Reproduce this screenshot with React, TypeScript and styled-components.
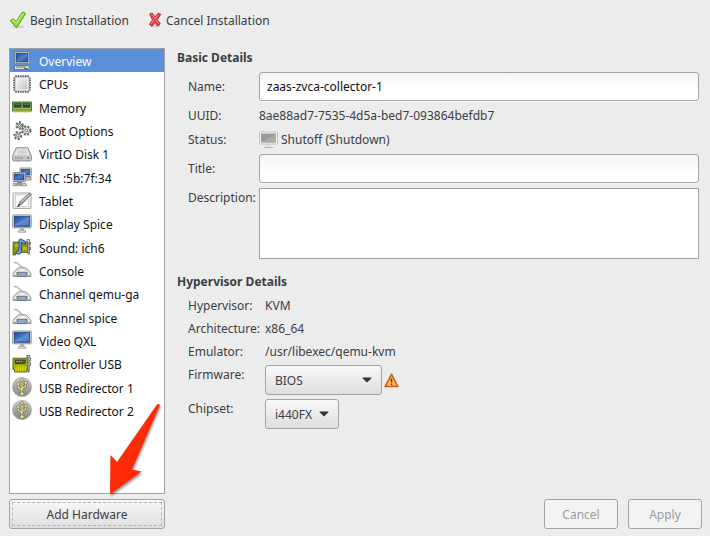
import React from "react";
import styled, { createGlobalStyle } from "styled-components";

const GlobalStyle = createGlobalStyle`
  *, *::before, *::after { box-sizing: border-box; }
  body {
    margin: 0;
    background: #ececec;
    color: #3a4043;
    font-family: "Noto Sans", "Open Sans", sans-serif;
    font-size: 12px;
    line-height: 19px;
  }
  button, input, select, textarea { font: inherit; color: inherit; margin: 0; }
`;

const Window = styled.div`
  display: flex;
  flex-direction: column;
  min-height: 100vh;
  padding: 0 8px 7px 9px;
`;

const Toolbar = styled.header`
  display: flex;
  gap: 18px;
  height: 40px;
  align-items: center;
`;

const ToolButton = styled.button`
  display: flex;
  align-items: center;
  gap: 3px;
  padding: 0;
  border: 0;
  background: none;
`;

const Body = styled.div`
  display: flex;
  flex: 1;
  gap: 12px;
  padding-top: 8px;
`;

const Sidebar = styled.aside`
  position: relative;
  display: flex;
  flex-direction: column;
  gap: 5px;
  flex: 0 0 156px;
`;

const ListFrame = styled.nav`
  flex: 1;
  border: 1px solid #a1a1a1;
  background: #fff;
`;

const HardwareList = styled.ul`
  display: grid;
  grid-auto-rows: 1fr;
  height: 373px;
  margin: 0;
  padding: 0;
  list-style: none;
`;

const HardwareItem = styled.button<{ $selected: boolean }>`
  display: flex;
  align-items: center;
  gap: 7px;
  width: 100%;
  height: 100%;
  padding: 0 2px;
  border: 0;
  text-align: left;
  white-space: nowrap;
  color: ${(p) => (p.$selected ? "#fff" : "#111")};
  background: ${(p) => (p.$selected ? "#5a8fdc" : "transparent")};
`;

const ItemLabel = styled.span`
  padding-top: 2px;
`;

const PushButton = styled.button`
  height: 30px;
  min-width: 74px;
  padding: 0 10px;
  border: 1px solid #a3a3a3;
  border-radius: 3px;
  background: linear-gradient(#f8f8f8, #dedede);
  &:disabled {
    color: #9b9d9e;
    background: #f3f3f3;
  }
`;

const FocusedButton = styled(PushButton)`
  outline: 1px dashed #b5b5b5;
  outline-offset: -4px;
`;

const Pointer = styled.svg`
  position: absolute;
  right: 0;
  bottom: 30px;
  width: 60px;
  height: 96px;
  overflow: visible;
  pointer-events: none;
`;

const Details = styled.main`
  display: flex;
  flex-direction: column;
  flex: 1;
  min-width: 0;
`;

const Heading = styled.h2`
  margin: 0;
  padding-bottom: 5px;
  font-size: 12px;
  line-height: 19px;
  font-weight: 700;
`;

const BasicForm = styled.div`
  display: grid;
  grid-template-columns: 71px 1fr;
  row-gap: 5px;
  padding: 0 3px 0 11px;
  margin-bottom: 13px;
`;

const HypervisorForm = styled.div`
  display: grid;
  grid-template-columns: 77px 1fr;
  row-gap: 4px;
  padding: 0 3px 0 11px;
`;

const Label = styled.label<{ $centered?: boolean }>`
  align-self: ${(p) => (p.$centered ? "center" : "start")};
  white-space: nowrap;
`;

const Caption = styled.span`
  white-space: nowrap;
`;

const Value = styled.span`
  display: flex;
  align-items: center;
  gap: 3px;
  height: 19px;
`;

const TextField = styled.input`
  width: 100%;
  height: 29px;
  padding: 0 7px;
  border: 1px solid #a3a3a3;
  border-radius: 3px;
  color: #111;
  background: linear-gradient(#f5f5f5, #fff 70%);
  box-shadow: 0 1px 0 #f8f8f8;
`;

const TextArea = styled.textarea`
  display: block;
  width: 100%;
  height: 71px;
  border: 1px solid #a3a3a3;
  border-radius: 0;
  background: #fff;
  resize: none;
`;

const SelectRow = styled.div`
  display: flex;
  align-items: center;
  gap: 2px;
`;

const SelectFrame = styled.div<{ $width: number }>`
  position: relative;
  width: ${(p) => p.$width}px;
`;

const Select = styled.select`
  appearance: none;
  display: block;
  width: 100%;
  height: 30px;
  padding: 0 20px 0 9px;
  border: 1px solid #a3a3a3;
  border-radius: 3px;
  background: linear-gradient(#f8f8f8, #dedede);
`;

const Caret = styled.svg`
  position: absolute;
  right: 10px;
  top: 12px;
  width: 10px;
  height: 6px;
  pointer-events: none;
`;

const Actions = styled.footer`
  display: flex;
  justify-content: flex-end;
  gap: 10px;
  margin-top: auto;
`;

const Glyph = styled.svg<{ $size?: number }>`
  flex: none;
  width: ${(p) => p.$size ?? 20}px;
  height: ${(p) => p.$size ?? 20}px;
`;

type IconName =
  | "computer" | "cpu" | "memory" | "gears" | "disk" | "network" | "tablet"
  | "display" | "sound" | "serial" | "card" | "usb";

const Defs = () => (
  <svg width="0" height="0" style={{ position: "absolute" }} aria-hidden>
    <defs>
      <linearGradient id="screen" x1="0" y1="0" x2="1" y2="1">
        <stop offset="0" stopColor="#1f4796" />
        <stop offset="0.5" stopColor="#4c7ccb" />
        <stop offset="1" stopColor="#2753a5" />
      </linearGradient>
      <linearGradient id="metal" x1="0" y1="0" x2="1" y2="1">
        <stop offset="0" stopColor="#fafafa" />
        <stop offset="1" stopColor="#bdbdbb" />
      </linearGradient>
      <linearGradient id="dark" x1="0" y1="0" x2="0" y2="1">
        <stop offset="0" stopColor="#c9c9c9" />
        <stop offset="1" stopColor="#868686" />
      </linearGradient>
    </defs>
  </svg>
);

const Gear = ({ x, y, r }: { x: number; y: number; r: number }) => (
  <g>
    <circle cx={x} cy={y} r={r} fill="none" stroke="#62655f" strokeWidth="2.6" strokeDasharray="1.8 1.4" />
    <circle cx={x} cy={y} r={r - 0.6} fill="#eeeeec" stroke="#777a74" strokeWidth="0.8" />
    <circle cx={x} cy={y} r={r * 0.36} fill="#fff" stroke="#62655f" strokeWidth="0.9" />
  </g>
);

const Screen = ({ x, y, w, h }: { x: number; y: number; w: number; h: number }) => (
  <g>
    <rect x={x} y={y} width={w} height={h} rx="0.8" fill="#e6e6e2" stroke="#70736e" strokeWidth="0.8" />
    <rect x={x + 1.5} y={y + 1.5} width={w - 3} height={h - 3} fill="url(#screen)" stroke="#193a78" strokeWidth="0.7" />
  </g>
);

const artwork: Record<IconName, React.ReactNode> = {
  computer: (
    <>
      <Screen x={2.5} y={1} w={15} h={11.5} />
      <path d="M8 12.5h4l1 2H7z" fill="#8e918c" />
      <path d="M2.5 14.5h13.5l2 2.5v1.5H2.5z" fill="#e1e1dd" stroke="#676a65" strokeWidth="0.8" />
      <path d="M4 16h10M12 17.5h4.5" stroke="#4d504b" strokeWidth="0.8" />
    </>
  ),
  cpu: (
    <>
      <path d="M4 1v18M6.4 1v18M8.8 1v18M11.2 1v18M13.6 1v18M16 1v18M1 4h18M1 6.4h18M1 8.8h18M1 11.2h18M1 13.6h18M1 16h18" stroke="#5e605c" strokeWidth="1.2" />
      <rect x="2.6" y="2.6" width="14.8" height="14.8" rx="1" fill="#d9d9d7" stroke="#777975" strokeWidth="0.8" />
      <rect x="4.4" y="4.4" width="11.2" height="11.2" fill="url(#metal)" stroke="#f7f7f7" strokeWidth="0.6" />
    </>
  ),
  memory: (
    <>
      <rect x="0.5" y="5" width="19" height="9" fill="#5f9a48" stroke="#3b652a" strokeWidth="0.8" />
      <path d="M2 6.2h7v4.4H2zM11 6.2h7v4.4h-7z" fill="#394036" />
      <path d="M3 7.3h5M12 7.3h5" stroke="#76806f" strokeWidth="0.8" />
      <path d="M1 11.7h18" stroke="#a4cc72" strokeWidth="0.9" />
      <path d="M1 14.3h18" stroke="#c1ab3c" strokeWidth="2.4" strokeDasharray="1.2 0.6" />
    </>
  ),
  gears: (
    <>
      <Gear x={7.5} y={4.5} r={2.9} />
      <Gear x={14.2} y={9.5} r={3.9} />
      <Gear x={5.8} y={14.6} r={3.2} />
    </>
  ),
  disk: (
    <>
      <path d="M4.4 3.8h11.2l3.6 7.5v4.6q0 1-1 1H1.8q-1 0-1-1v-4.6z" fill="url(#metal)" stroke="#747672" strokeWidth="0.9" />
      <path d="M4.8 4.8h10.4l3 6.5H1.8z" fill="#e9e9e7" stroke="#c5c6c3" strokeWidth="0.6" />
      <ellipse cx="10" cy="8" rx="4.8" ry="2.5" fill="#d3d4d1" />
      <path d="M1.2 11.6h17.6v4.6H1.2z" fill="#c5c6c3" />
      <path d="M3 14h8" stroke="#878985" strokeWidth="1.3" strokeDasharray="0.8 0.7" />
      <circle cx="16" cy="14" r="1" fill="#777" />
    </>
  ),
  network: (
    <>
      <Screen x={8} y={1} w={11.3} h={8.5} />
      <path d="M13 10h6v3h-6z" fill="#c8c9c5" stroke="#6b6e69" strokeWidth="0.7" />
      <Screen x={1} y={5.5} w={12.5} h={9} />
      <path d="M5 14.8h5v1.4H5z" fill="#888b86" />
      <path d="M1.5 16.2h12l1.3 2.5H1z" fill="#e1e1dd" stroke="#676a65" strokeWidth="0.7" />
      <path d="M3 17.3h8" stroke="#555852" strokeWidth="0.6" />
    </>
  ),
  tablet: (
    <>
      <rect x="1" y="2" width="18" height="15.5" rx="1" fill="#ededeb" stroke="#a8aaa6" />
      <rect x="3.5" y="4" width="13" height="11.5" fill="#fafafa" stroke="#c7c8c5" strokeWidth="0.7" />
      <path d="M6.3 15l1.4-4.2L17.5 2.2l1.6 1.1-9 9.6z" fill="#a7a9a5" stroke="#5f625d" strokeWidth="0.8" />
      <path d="M9.5 10.5l7.8-6.8" stroke="#e4e5e2" strokeWidth="0.8" />
      <path d="M5.6 15.8l2-2.4" stroke="#333" strokeWidth="1.2" />
    </>
  ),
  display: (
    <>
      <Screen x={0.8} y={1} w={18.4} h={12.8} />
      <path d="M2.5 10.8L17 3v8.4z" fill="#78a0df" opacity="0.45" />
      <path d="M7.8 14h4.4v2.7H7.8z" fill="#b4b6b2" />
      <path d="M6 17q4-1.5 8 0v1.2H6z" fill="#e8e8e5" stroke="#90928e" strokeWidth="0.7" />
    </>
  ),
  sound: (
    <>
      <path d="M1 5h15v10.5H3.5V18H1z" fill="#8c981b" stroke="#525d0c" strokeWidth="0.8" />
      <path d="M3 7h4v3H3zM11 10h4v3h-4z" fill="#b5b830" />
      <path d="M15 2.5h2.5V17H16V5h-1z" fill="#d7d8d4" stroke="#666963" strokeWidth="0.8" />
      <path d="M18.2 5v3M18.2 10v3" stroke="#555" strokeWidth="1.2" />
      <path d="M7 3l1.7-1 4.4 2.3.5 3.1-4.3-2.2v9.2q0 2.1-2.2 2.7-2.5.5-3-1.1-.3-2 2.9-3z" fill="#79a5dc" stroke="#204a87" />
    </>
  ),
  serial: (
    <>
      <path d="M2.2 3.2Q3.5 1.5 6 3.8q3.2 3.2 6.3 4.8" fill="none" stroke="#b3b5b0" strokeWidth="1.5" />
      <path d="M6.2 7.8h7.5l2.8 2.4 2.4 3v3.2H1v-3l3-3.4z" fill="#e5e5e2" stroke="#8c8e8a" strokeWidth="0.9" />
      <path d="M7.4 8.8h5.3l1.7 2.4H5.6z" fill="#fff" stroke="#aeb0ac" strokeWidth="0.6" />
      <path d="M4.7 12.6h10.6l-1 4H5.7z" fill="#6c94c4" stroke="#686b67" strokeWidth="0.8" />
      <path d="M6.2 13.8h7.8M6.7 15.3h6.8" stroke="#d5e1ef" strokeWidth="0.8" strokeDasharray="1 0.6" />
      <path d="M1.5 15.9h3M15.5 15.9h3" stroke="#858784" />
    </>
  ),
  card: (
    <>
      <path d="M1 4.2h15.4v11.2h-1.6V18H2.5v-2.6H1z" fill="#a2a70e" stroke="#5e6505" strokeWidth="0.9" />
      <rect x="3.2" y="6" width="10" height="3.6" fill="#53583d" stroke="#32361f" strokeWidth="0.7" />
      <path d="M4 7.5h6" stroke="#8a9380" />
      <path d="M4 12.3v5M6.3 11.5v6M8.6 12.3v5M11 11.5v6M13.3 12.3v5" stroke="#dce000" strokeWidth="1.2" />
      <path d="M14.8 1.5h2.8v2.2h1v3h-1.3v2h1.3v3h-1.3V18h-1.4V3.5h-1.1z" fill="#babcb7" stroke="#5c5f59" strokeWidth="0.8" />
    </>
  ),
  usb: (
    <>
      <circle cx="10" cy="10" r="9.6" fill="url(#dark)" stroke="#a2a2a2" strokeWidth="0.6" />
      <g fill="none" stroke="#5d5b36" strokeWidth="2.4">
        <path d="M10 17V3M10 13l-3.7-2.6V7M10 11.5l3.7-2.3V6" />
      </g>
      <g fill="none" stroke="#efe59a" strokeWidth="1.3">
        <path d="M10 17V3M10 13l-3.7-2.6V7M10 11.5l3.7-2.3V6" />
      </g>
      <path d="M10 1l2.2 3.2H7.8zM12.4 4.5h2.7v2.7h-2.7z" fill="#efe59a" stroke="#5d5b36" strokeWidth="0.5" />
      <circle cx="6.3" cy="7" r="1.5" fill="#efe59a" stroke="#5d5b36" strokeWidth="0.5" />
      <circle cx="10" cy="16.8" r="1.9" fill="#efe59a" stroke="#5d5b36" strokeWidth="0.5" />
    </>
  ),
};

const Icon = ({ name }: { name: IconName }) => (
  <Glyph viewBox="0 0 20 20" aria-hidden>{artwork[name]}</Glyph>
);

const hardware: { label: string; icon: IconName }[] = [
  { label: "Overview", icon: "computer" },
  { label: "CPUs", icon: "cpu" },
  { label: "Memory", icon: "memory" },
  { label: "Boot Options", icon: "gears" },
  { label: "VirtIO Disk 1", icon: "disk" },
  { label: "NIC :5b:7f:34", icon: "network" },
  { label: "Tablet", icon: "tablet" },
  { label: "Display Spice", icon: "display" },
  { label: "Sound: ich6", icon: "sound" },
  { label: "Console", icon: "serial" },
  { label: "Channel qemu-ga", icon: "serial" },
  { label: "Channel spice", icon: "serial" },
  { label: "Video QXL", icon: "display" },
  { label: "Controller USB", icon: "card" },
  { label: "USB Redirector 1", icon: "usb" },
  { label: "USB Redirector 2", icon: "usb" },
];

const Dropdown = ({ id, value, width }: { id: string; value: string; width: number }) => (
  <SelectFrame $width={width}>
    <Select id={id} defaultValue={value}>
      <option>{value}</option>
    </Select>
    <Caret viewBox="0 0 10 6" aria-hidden>
      <path d="M1 0.5h8q1 0 .4.7L5.6 5q-.6.6-1.2 0L.6 1.2Q0 .5 1 .5z" fill="#2e3436" />
    </Caret>
  </SelectFrame>
);

export default function App() {
  const [selected, setSelected] = React.useState(0);
  return (
    <Window>
      <GlobalStyle />
      <Defs />
      <Toolbar>
        <ToolButton>
          <Glyph $size={18} viewBox="0 0 18 18" aria-hidden>
            <ellipse cx="9" cy="15.8" rx="6.5" ry="1.6" fill="#d2d2d2" />
            <path d="M1.4 9.6l2.7-1.8 3 2.7L13.5 1l3.2 1.5L8 16q-.7.6-1.3-.1z" fill="#9bdc3c" stroke="#4e9a06" strokeLinejoin="round" />
            <path d="M3 9.6l1-.6 3.3 3L14 2.5" fill="none" stroke="#d6f59c" />
          </Glyph>
          Begin Installation
        </ToolButton>
        <ToolButton>
          <Glyph $size={16} viewBox="0 0 16 18" aria-hidden>
            <ellipse cx="8" cy="15.8" rx="6" ry="1.6" fill="#d2d2d2" />
            <path d="M2 2.2l3-.9 3 4.2 3.5-4.2 3 1.3-3.9 5.9 3.3 5-2.8 2.3L8 11.5l-3.3 4.4L1.8 14l3.3-5.3z" fill="#e44c4c" stroke="#a51d22" strokeLinejoin="round" />
            <path d="M3.1 3.1l1.5-.4L8 7.2l3.7-4.3M6.4 8.8L3.2 13.6M9.4 8.8l2.8 4.5" fill="none" stroke="#f69a92" strokeWidth="0.9" />
          </Glyph>
          Cancel Installation
        </ToolButton>
      </Toolbar>
      <Body>
        <Sidebar>
          <ListFrame aria-label="Hardware">
            <HardwareList>
              {hardware.map((item, i) => (
                <li key={item.label}>
                  <HardwareItem $selected={i === selected} onClick={() => setSelected(i)}>
                    <Icon name={item.icon} />
                    <ItemLabel>{item.label}</ItemLabel>
                  </HardwareItem>
                </li>
              ))}
            </HardwareList>
          </ListFrame>
          <FocusedButton>Add Hardware</FocusedButton>
          <Pointer viewBox="0 0 60 96" aria-hidden>
            <path
              d="M5 91.5L5.5 52l6.5 7L52 1.6q2-1.6 2.8.7L27 66.5l9.500 2z"
              fill="#ff2a08"
              strokeLinejoin="round"
              filter="drop-shadow(1px 2px 1px rgba(0,0,0,0.4))"
            />
          </Pointer>
        </Sidebar>
        <Details>
          <Heading>Basic Details</Heading>
          <BasicForm>
            <Label $centered htmlFor="name">Name:</Label>
            <TextField id="name" defaultValue="zaas-zvca-collector-1" />
            <Caption>UUID:</Caption>
            <Value>8ae88ad7-7535-4d5a-bed7-093864befdb7</Value>
            <Caption>Status:</Caption>
            <Value>
              <Glyph $size={19} viewBox="0 0 19 19" aria-hidden>
                <rect x="0.500" y="2" width="18" height="12" rx="1" fill="#fafafa" stroke="#bdbdbb" />
                <rect x="2" y="3.500" width="15" height="9" fill="#999" />
                <path d="M2 12.500L17 4v8.500z" fill="#aaa" />
                <path d="M7.500 14.500h4l1 2.500h-6z" fill="#ddd" />
                <path d="M5 17.500h9" stroke="#b5b5b5" />
              </Glyph>
              Shutoff (Shutdown)
            </Value>
            <Label $centered htmlFor="title">Title:</Label>
            <TextField id="title" />
            <Label htmlFor="description">Description:</Label>
            <TextArea id="description" />
          </BasicForm>
          <Heading>Hypervisor Details</Heading>
          <HypervisorForm>
            <Caption>Hypervisor:</Caption>
            <Value>KVM</Value>
            <Caption>Architecture:</Caption>
            <Value>x86_64</Value>
            <Caption>Emulator:</Caption>
            <Value>/usr/libexec/qemu-kvm</Value>
            <Label htmlFor="firmware">Firmware:</Label>
            <SelectRow>
              <Dropdown id="firmware" value="BIOS" width={117} />
              <Glyph $size={15} viewBox="0 0 15 15" role="img" aria-label="Warning">
                <path d="M7.500 1.200L14 13.500H1z" fill="#f6922a" stroke="#c9600c" strokeWidth="1.400" strokeLinejoin="round" />
                <path d="M7.500 3.500L12.300 12.500H2.700z" fill="#fbb765" />
                <path d="M7.500 5.500v4M7.500 10.500v1.500" stroke="#5a3a1a" strokeWidth="1.400" />
              </Glyph>
            </SelectRow>
            <Label htmlFor="chipset">Chipset:</Label>
            <SelectRow>
              <Dropdown id="chipset" value="i440FX" width={74} />
            </SelectRow>
          </HypervisorForm>
          <Actions>
            <PushButton disabled>Cancel</PushButton>
            <PushButton disabled>Apply</PushButton>
          </Actions>
        </Details>
      </Body>
    </Window>
  );
}
